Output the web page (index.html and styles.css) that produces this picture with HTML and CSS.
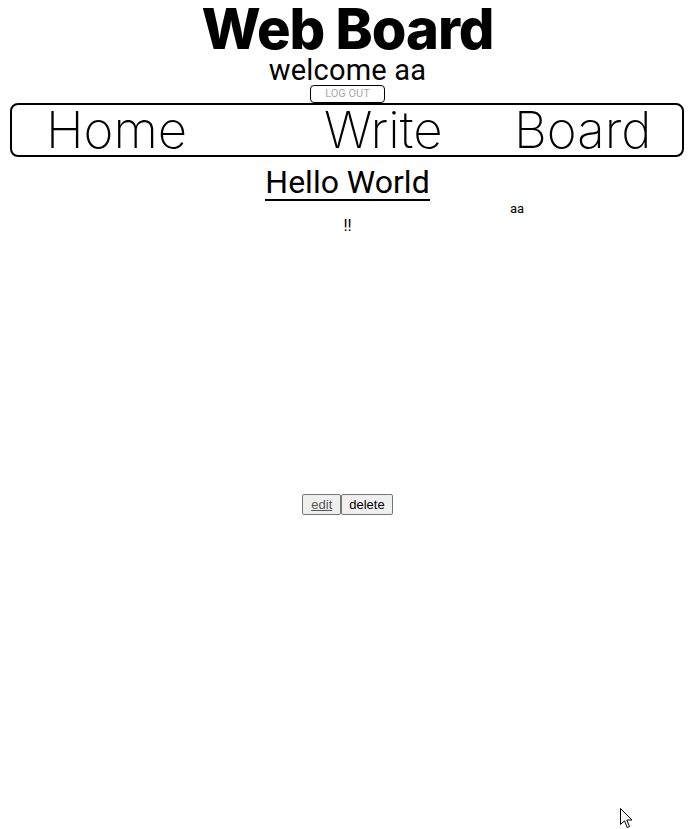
FILE: index.html
```html
<!DOCTYPE html>
<html>
<head>
<meta charset="utf-8">
<link rel="stylesheet" href="styles.css">
</head>
<body>
<header class="top">
  <h1 class="title">Web Board</h1>
  <div class="welcome">welcome aa</div>
  <button class="logout">LOG OUT</button>
</header>
<nav class="nav">
  <a class="nav-home">Home</a>
  <a class="nav-write">Write</a>
  <a class="nav-board">Board</a>
</nav>
<main class="post">
  <h2 class="post-title">Hello World</h2>
  <div class="author">aa</div>
  <div class="content">!!</div>
  <div class="actions">
    <button class="btn btn-edit"><a>edit</a></button><button class="btn">delete</button>
  </div>
</main>
<svg class="cursor" width="13" height="21" viewBox="0 0 13 21"><path d="M0.5 0.5 L0.5 16.5 L4.5 12.8 L7.2 19.5 L9.5 18.5 L6.8 12 L12 12 Z" fill="#fff" stroke="#000" stroke-width="1"/></svg>
</body>
</html>
```
FILE: styles.css
```css
html, body { margin: 0; padding: 0; background: #fff; }
body { font-family: Roboto, "Liberation Sans", sans-serif; color: #000; width: 695px; height: 829px; position: relative; overflow: hidden; }
.top { display: flex; flex-direction: column; align-items: center; padding-top: 2px; }
.title { margin: 0; font-family: Inter, sans-serif; font-weight: 800; font-size: 56px; line-height: 54px; letter-spacing: -1px; height: 54px; }
.welcome { font-size: 29px; line-height: 29px; letter-spacing: 0.2px; }
.logout { font-family: Roboto, sans-serif; font-size: 11px; color: #aaa; background: #fff; border: 1px solid #000; border-radius: 4px; width: 75px; height: 18px; padding: 0; line-height: 16px; }
.nav { margin: 0 11px 0 10px; height: 50px; border: 2px solid #000; border-radius: 8px; position: relative; font-family: Inter, sans-serif; font-weight: 200; font-size: 51px; line-height: 50px; }
.nav a { position: absolute; top: 0; }
.nav-home { left: 34px; }
.nav-write { left: 312px; }
.nav-board { left: 502px; }
.post { display: flex; flex-direction: column; align-items: center; }
.post-title { margin: 8px 0 0; font-weight: 400; font-size: 32px; line-height: 34px; border-bottom: 2px solid #000; }
.author { font-size: 13px; line-height: 16px; align-self: flex-start; margin-left: 510px; }
.content { font-size: 16px; line-height: 18px; }
.actions { margin-top: 259px; display: flex; }
.btn { font-family: "Liberation Sans", Arial, sans-serif; font-size: 13px; height: 21px; padding: 0 7px; background: #efefef; border: 1px solid #767676; border-radius: 2px; color: #000; }
.btn-edit { padding: 0 8px; }
.btn-edit a { color: #555; text-decoration: underline; }
.cursor { position: absolute; left: 620px; top: 808px; }
```
